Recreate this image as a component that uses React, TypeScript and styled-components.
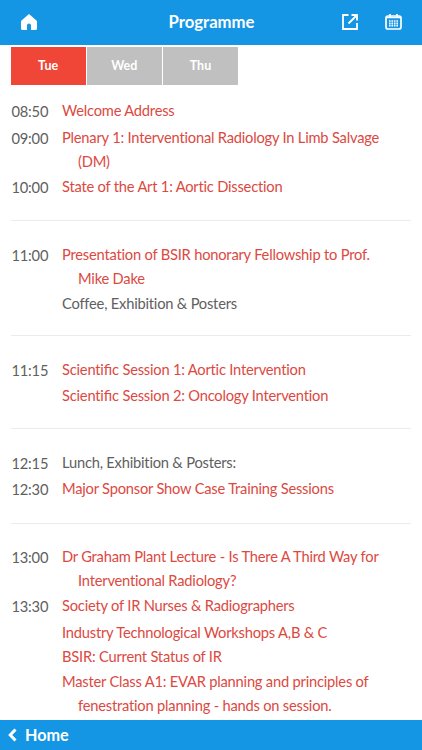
import React from 'react';
import styled, { createGlobalStyle } from 'styled-components';

const Global = createGlobalStyle`
  * { box-sizing: border-box; }
  body { margin: 0; background: #fff; font-family: Lato, sans-serif; }
`;
const Screen = styled.div`
  display: flex; flex-direction: column; width: 422px; height: 750px; overflow: hidden; background: #fff;
`;
const Header = styled.header`
  display: grid; grid-template-columns: 1fr auto 1fr; align-items: center; flex: none;
  height: 45px; padding: 0 20px 1px 21px; background: #1496e5; color: #fff;
`;
const Title = styled.h1`
  margin: 0; font-size: 16.7px; line-height: 20px; font-weight: 700;
`;
const Actions = styled.div`
  display: flex; justify-content: flex-end; align-items: center; gap: 27px;
`;
const Tabs = styled.nav`
  display: flex; flex: none; gap: 1px; margin: 2px 0 0 10.5px;
`;
const Tab = styled.button<{ $active?: boolean }>`
  width: 75.2px; height: 38px; padding: 0 0 2px; border: 0; color: #fff;
  background: ${p => (p.$active ? '#f04638' : '#c0c0c0')};
  font: 700 12.5px Lato, sans-serif;
`;
const List = styled.main`
  flex: 1; min-height: 0; overflow: hidden; padding: 13px 11px 0;
  font-variant-ligatures: none;
`;
const Section = styled.section`
  & + & { border-top: 1px solid #ebebeb; margin-top: 20.5px; padding-top: 20.5px; }
`;
const Row = styled.div<{ $h: number }>`
  display: grid; grid-template-columns: 51px 1fr; height: ${p => p.$h}px;
  font-size: 14.7px; line-height: 24.4px; letter-spacing: -0.21px;
`;
const Time = styled.time`
  color: #606060; padding-top: 1px; padding-left: 0.5px;
`;
const Entry = styled.div<{ $plain?: boolean }>`
  color: ${p => (p.$plain ? '#606060' : '#dc493f')}; white-space: pre; padding-left: 16px; text-indent: -16px;
`;
const Ligature = styled.span`
  font-variant-ligatures: common-ligatures; letter-spacing: 0;
`;
const Footer = styled.footer`
  display: flex; flex: none; align-items: center; gap: 8px; height: 30px; padding: 0 0 1px 8px;
  background: #1496e5; color: #fff; font-size: 16.2px; font-weight: 700;
`;

type Item = { time?: string; text: string; plain?: boolean; h: number };
const sections: Item[][] = [
  [
    { time: '08:50', text: 'Welcome Address', h: 26.5 },
    { time: '09:00', text: 'Plenary 1: Interventional Radiology In Limb Salvage\n(DM)', h: 49 },
    { time: '10:00', text: 'State of the Art 1: Aortic Dissection', h: 26 },
  ],
  [
    { time: '11:00', text: 'Presentation of BSIR honorary Fellowship to Prof.\nMike Dake', h: 49 },
    { text: 'Coffee, Exhibition & Posters', plain: true, h: 24 },
  ],
  [
    { time: '11:15', text: 'Scientific Session 1: Aortic Intervention', h: 26.5 },
    { text: 'Scientific Session 2: Oncology Intervention', h: 24.5 },
  ],
  [
    { time: '12:15', text: 'Lunch, Exhibition & Posters:', plain: true, h: 26.5 },
    { time: '12:30', text: 'Major Sponsor Show Case Training Sessions', h: 26 },
  ],
  [
    { time: '13:00', text: 'Dr Graham Plant Lecture - Is There A Third Way for\nInterventional Radiology?', h: 49 },
    { time: '13:30', text: 'Society of IR Nurses & Radiographers', h: 26.5 },
    { text: 'Industry Technological Workshops A,B & C', h: 24.5 },
    { text: 'BSIR: Current Status of IR', h: 24.5 },
    { text: 'Master Class A1: EVAR planning and principles of\nfenestration planning - hands on session.', h: 49 },
  ],
];

const withLigatures = (text: string) =>
  text.split(/(fi)/).map((part, i) => (part === 'fi' ? <Ligature key={i}>fi</Ligature> : part));

const HomeIcon = () => (
  <svg width="16" height="16" viewBox="0 0 16 16" fill="#fff">
    <path d="M8 0 .8 6.300Q0 7 0 8v6.500Q0 16 1.500 16H6v-4.500Q6 9.500 8 9.500t2 2V16h4.500q1.500 0 1.500-1.500V8q0-1-.8-1.700Z" />
  </svg>
);
const ShareIcon = () => (
  <svg width="16" height="16" viewBox="0 0 16 16" fill="none" stroke="#fff" strokeWidth="1.8">
    <path d="M6.500 1H1v14h14V9M9.500 1H15v5.500M15 1 6.500 9.500" />
  </svg>
);
const CalendarIcon = () => (
  <svg width="17" height="16" viewBox="0 0 17 16" fill="none" stroke="#fff" strokeWidth="1.700">
    <rect x="1" y="2" width="15" height="13" rx="2" />
    <path d="M1 3.500h15M5 0v3M12 0v3" />
    <path d="M4 7h9M4 9.300h9M4 11.600h9" strokeDasharray="1.600 .867" />
  </svg>
);
const BackIcon = () => (
  <svg width="9" height="14" viewBox="0 0 9 14" fill="none" stroke="#fff" strokeWidth="3">
    <path d="M7.500 1.500 2.200 7l5.300 5.500" />
  </svg>
);

export default function App() {
  return (
    <Screen>
      <Global />
      <Header>
        <HomeIcon />
        <Title>Programme</Title>
        <Actions><ShareIcon /><CalendarIcon /></Actions>
      </Header>
      <Tabs>
        <Tab $active>Tue</Tab>
        <Tab>Wed</Tab>
        <Tab>Thu</Tab>
      </Tabs>
      <List>
        {sections.map((items, i) => (
          <Section key={i}>
            {items.map(item => (
              <Row key={item.text} $h={item.h}>
                <Time>{item.time}</Time>
                <Entry $plain={item.plain}>{withLigatures(item.text)}</Entry>
              </Row>
            ))}
          </Section>
        ))}
      </List>
      <Footer><BackIcon />Home</Footer>
    </Screen>
  );
}
